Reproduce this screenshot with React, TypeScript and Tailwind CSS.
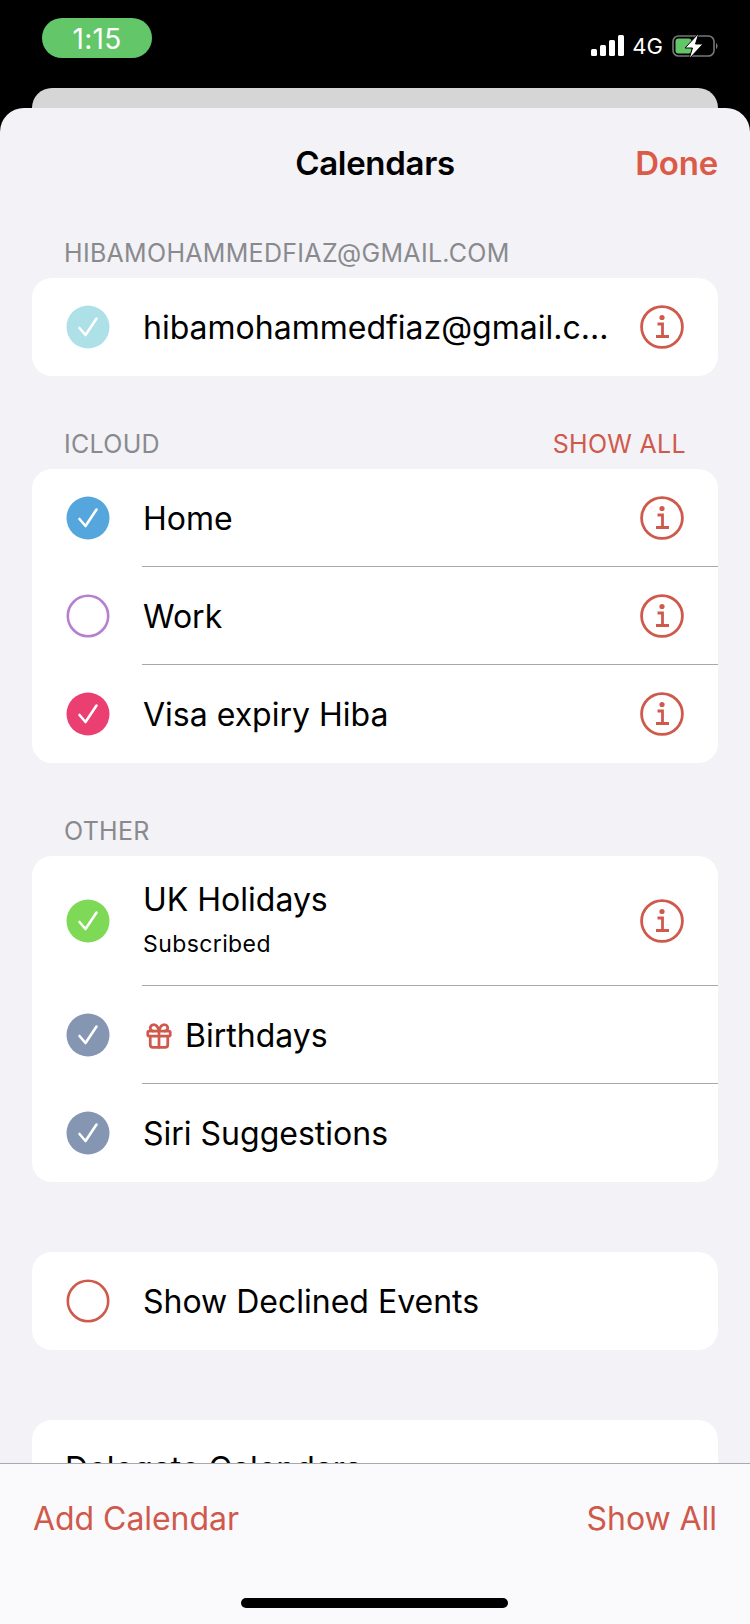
import React from "react";
import { Gift } from "lucide-react";

const font = { fontFamily: "Inter, 'Noto Sans', sans-serif" };

const Check: React.FC<{ color?: string; ring?: string }> = ({ color, ring }) => {
  if (ring) {
    return (
      <svg width="44" height="44" viewBox="0 0 44 44" className="shrink-0">
        <circle cx="22" cy="22" r="20.2" fill="none" stroke={ring} strokeWidth="2.6" />
      </svg>
    );
  }
  return (
    <svg width="44" height="44" viewBox="0 0 44 44" className="shrink-0">
      <circle cx="22" cy="22" r="21.5" fill={color} />
      <path d="M13.5 23 L19.5 30 L30.5 13.5" fill="none" stroke="#fff" strokeWidth="2.6" strokeLinecap="round" strokeLinejoin="round" />
    </svg>
  );
};

const Info = () => (
  <svg width="44" height="44" viewBox="0 0 44 44" className="shrink-0">
    <circle cx="22" cy="22" r="20.4" fill="none" stroke="#cf5a4c" strokeWidth="2.8" />
    <circle cx="22" cy="12.5" r="2.6" fill="#cf5a4c" />
    <path d="M17.5 19 H22.5 V31.5 M16 31.5 H29" fill="none" stroke="#cf5a4c" strokeWidth="2.8" />
  </svg>
);

const Row: React.FC<{
  color?: string;
  ring?: string;
  info?: boolean;
  sub?: string;
  last?: boolean;
  gift?: boolean;
  children: React.ReactNode;
}> = ({ color, ring, info, sub, last, gift, children }) => (
  <div className={`flex items-stretch pl-[34px] ${sub ? "h-[130px]" : "h-[98px]"}`}>
    <div className="flex w-[76px] shrink-0 items-center">
      <Check color={color} ring={ring} />
    </div>
    <div className={`flex min-w-0 flex-1 items-center pr-[34px] ${last ? "" : "border-b border-[#a8a8ac]"}`}>
      <div className={`min-w-0 flex-1 pl-[1px] ${sub ? "pb-[3px]" : "pt-[2px]"}`}>
        <div className="flex items-center text-[32px] leading-[40px] text-black">
          {gift && <Gift size={30} strokeWidth={2.2} color="#cf5a4c" className="ml-[1px] mr-[11px] shrink-0" />}
          <span className="truncate">{children}</span>
        </div>
        {sub && <div className="mt-[10px] text-[23px] leading-[28px] tracking-[0.4px] text-black">{sub}</div>}
      </div>
      {info && <Info />}
    </div>
  </div>
);

const Card: React.FC<{ children: React.ReactNode; className?: string }> = ({ children, className }) => (
  <div className={`mx-8 overflow-hidden rounded-[20px] bg-white ${className ?? ""}`}>{children}</div>
);

const SectionHead: React.FC<{ children: React.ReactNode; right?: string }> = ({ children, right }) => (
  <div className="flex h-[38px] items-center justify-between px-[64px] text-[25px] tracking-[0.3px] text-[#8a8a8e]">
    <span>{children}</span>
    {right && <span className="text-[#cf5a4c]">{right}</span>}
  </div>
);

export default function App() {
  return (
    <div className="relative flex h-[1624px] w-[750px] flex-col overflow-hidden bg-black" style={font}>
      {/* status bar */}
      <div className="flex h-[88px] shrink-0 items-start justify-between pl-[42px] pr-[32px] pt-[18px] text-white">
        <div className="flex h-[40px] w-[110px] items-center justify-center rounded-[20px] bg-[#63c76a] pt-[2px] text-[28px] tracking-[0.3px]">
          1:15
        </div>
        <div className="mt-[15px] flex items-center">
          <svg width="34" height="22" viewBox="0 0 34 22">
            <rect x="0" y="14" width="6" height="7" rx="1.5" fill="#fff" />
            <rect x="9" y="10" width="6" height="11" rx="1.5" fill="#fff" />
            <rect x="18" y="5" width="6" height="16" rx="1.5" fill="#fff" />
            <rect x="27" y="0" width="6" height="21" rx="1.5" fill="#fff" />
          </svg>
          <span className="ml-[7px] text-[22px] leading-[24px]">4G</span>
          <svg width="46" height="26" viewBox="0 0 46 26" className="ml-[9px]">
            <rect x="1" y="3" width="41" height="20" rx="5.5" fill="none" stroke="#77777a" strokeWidth="1.6" />
            <rect x="3.5" y="5.5" width="16" height="15" rx="3" fill="#63c76a" />
            <path d="M44 10 C46 11 46 15 44 16 Z" fill="#77777a" />
            <path d="M27 0 L13 15 H20.5 L17 26 L31 11 H23.5 Z" fill="#fff" stroke="#000" strokeWidth="1" />
          </svg>
        </div>
      </div>
      <div className="mx-8 h-[20px] shrink-0 rounded-t-[20px] bg-[#d6d6d6]" />

      {/* sheet */}
      <div className="relative flex-1 overflow-hidden rounded-t-[24px] bg-[#f2f2f7]">
        <div className="relative flex h-[112px] items-center justify-center">
          <span className="text-[33px] font-semibold tracking-[-0.3px] text-black">Calendars</span>
          <span className="absolute right-[32px] text-[33px] font-semibold tracking-[-0.2px] text-[#dc5a48]">Done</span>
        </div>
        <div className="mt-[15px]">
          <SectionHead>HIBAMOHAMMEDFIAZ@GMAIL.COM</SectionHead>
        </div>
        <Card className="mt-[5px]">
          <Row color="#aee0e8" info last>hibamohammedfiaz@gmail.c...</Row>
        </Card>
        <div className="mt-[50px]">
          <SectionHead right="SHOW ALL">ICLOUD</SectionHead>
        </div>
        <Card className="mt-[5px]">
          <Row color="#55a6dc" info>Home</Row>
          <Row ring="#b67fd0" info>Work</Row>
          <Row color="#ec3f71" info last>Visa expiry Hiba</Row>
        </Card>
        <div className="mt-[50px]">
          <SectionHead>OTHER</SectionHead>
        </div>
        <Card className="mt-[5px]">
          <Row color="#7ed957" info sub="Subscribed">UK Holidays</Row>
          <Row color="#8496b2" gift>Birthdays</Row>
          <Row color="#8496b2" last>Siri Suggestions</Row>
        </Card>
        <Card className="mt-[70px]">
          <Row ring="#cf5a4c" last>Show Declined Events</Row>
        </Card>
        <Card className="mt-[70px] h-[98px]">
          <div className="flex h-[98px] items-center pl-[33px] text-[32px] text-black">Delegate Calendars</div>
        </Card>
      </div>

      {/* bottom toolbar sits over the scrolling list */}
      <div className="absolute inset-x-0 bottom-0 h-[161px] border-t border-[#a9a9ad] bg-[#fafafc]">
        <div className="flex items-center justify-between px-[33px] pt-[35px] text-[32px] leading-[40px] tracking-[-0.05px] text-[#cf5a4c]">
          <span>Add Calendar</span>
          <span>Show All</span>
        </div>
        <div className="absolute bottom-[16px] left-[241px] h-[10px] w-[267px] rounded-full bg-black" />
      </div>
    </div>
  );
}
